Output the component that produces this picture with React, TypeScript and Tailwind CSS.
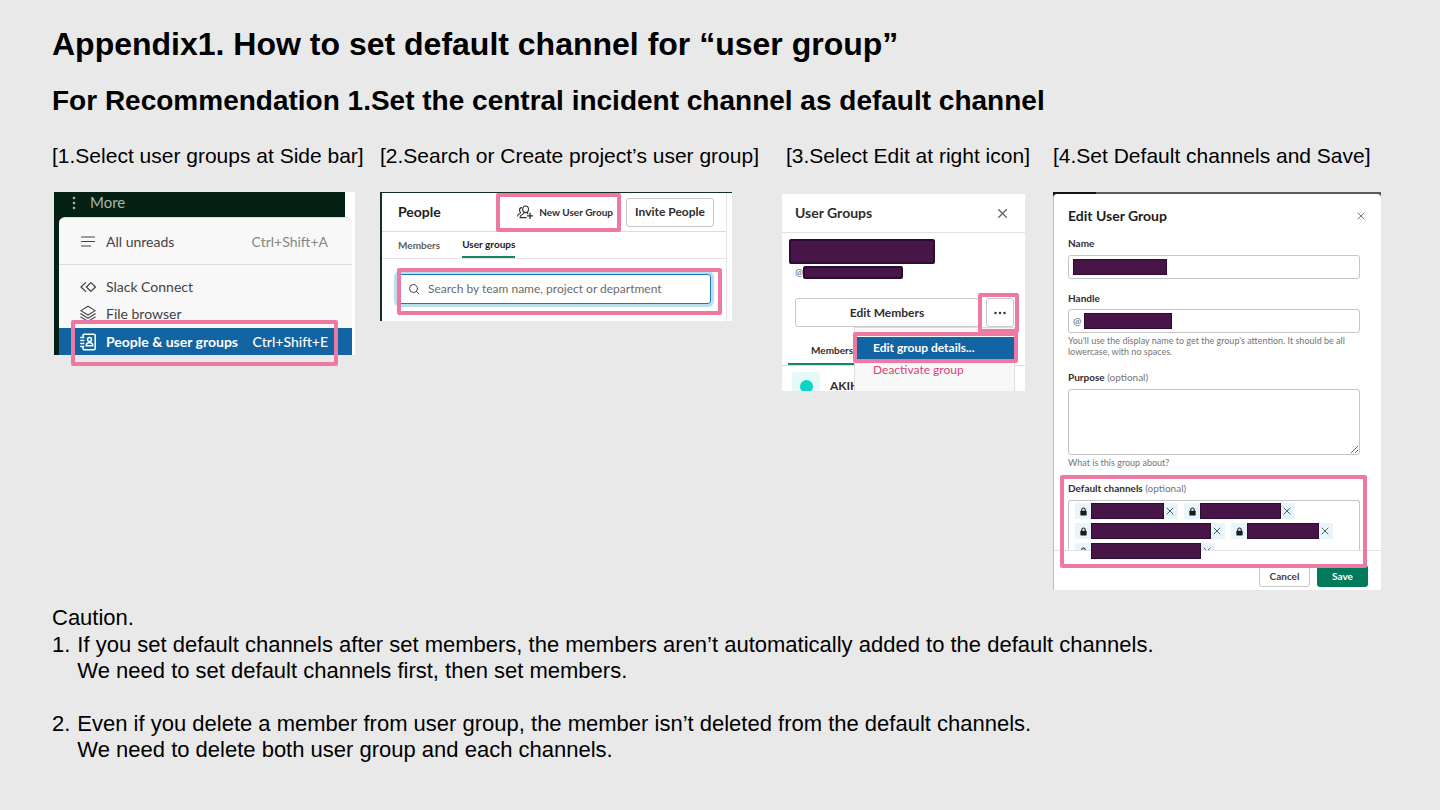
import type { ReactNode } from 'react'
import clsx from 'clsx'
import { Search, X } from 'lucide-react'

// Pink frame that marks the spot to click
function Mark({ className }: { className: string }) {
  return <span aria-hidden className={clsx('pointer-events-none absolute z-20 rounded-xs border-4 border-[#ee7aa3]', className)} />
}

// Masked private name
function Redacted({ className }: { className: string }) {
  return <span className={clsx('block shrink-0 border border-[#2c0c31] bg-[#481549]', className)} />
}

function Step({ caption, className, children }: { caption: string; className?: string; children: ReactNode }) {
  return (
    <figure className="flex min-w-0 flex-col">
      <figcaption className={clsx('mb-[22px] text-[21px] leading-7 whitespace-nowrap', className)}>{caption}</figcaption>
      {children}
    </figure>
  )
}

function UnreadsIcon() {
  return (
    <svg viewBox="0 0 16 16" className="h-4 w-4" fill="none" stroke="currentColor" strokeWidth="1.2" strokeLinecap="round">
      <path d="M1.5 3h13M1.5 7.5h13M1.5 12h9" />
    </svg>
  )
}

function ConnectIcon() {
  return (
    <svg viewBox="0 0 16 16" className="h-4 w-4" fill="none" stroke="currentColor" strokeWidth="1.3" strokeLinecap="round" strokeLinejoin="round">
      <path d="M5.6 3.6 1 8l4.6 4.4M10.9 3.6 15.4 8l-4.5 4.4L6.4 8z" />
    </svg>
  )
}

function FilesIcon() {
  return (
    <svg viewBox="0 0 16 18" className="h-[18px] w-4" fill="none" stroke="currentColor" strokeWidth="1.1" strokeLinecap="round" strokeLinejoin="round">
      <path d="M8 1.2 15.2 5.6 8 10 .8 5.6zM.8 8.8 8 13.2l7.2-4.4M.8 12 8 16.4l7.2-4.4" />
    </svg>
  )
}

function DirectoryIcon() {
  return (
    <svg viewBox="0 0 16 18" className="h-[18px] w-4" fill="none" stroke="currentColor" strokeWidth="1.5" strokeLinecap="round">
      <path d="M3 3.4v-.8A1.4 1.4 0 0 1 4.4 1.2h9.4a1.4 1.4 0 0 1 1.4 1.4v12.8a1.4 1.4 0 0 1-1.4 1.4H4.4A1.4 1.4 0 0 1 3 15.4v-.8" />
      <path d="M.8 4.5h3M.8 7.5h3M.8 10.5h3M.8 13.5h3" />
      <circle cx="9.5" cy="6.6" r="2" />
      <path d="M6.2 12.8c0-1.8.9-2.8 2.200-3h2.200c1.300.2 2.200 1.200 2.200 3z" />
    </svg>
  )
}

function AddGroupIcon() {
  return (
    <svg viewBox="0 0 16 15" className="h-[15px] w-4" fill="none" stroke="currentColor" strokeWidth="1.1" strokeLinecap="round" strokeLinejoin="round">
      <ellipse cx="8.6" cy="4.300" rx="2.900" ry="3.300" />
      <path d="M7.200 7.300c0 1.200-.6 1.600-2 2.100-1.500.6-2.200 1.500-2.200 3.200h6.200M10 7.300c0 .8.2 1.100.8 1.500" />
      <path d="M4.500 2.600C3.200 2.800 2.400 3.800 2.500 5.200c.1 1.200.6 1.800 1 2.200 0 .7-.4.9-1.200 1.300C1 9.300.6 10 .6 11" />
      <path d="M13 8.200v5.200M10.400 10.800h5.200" strokeWidth="1.300" />
    </svg>
  )
}

function LockIcon() {
  return (
    <svg viewBox="0 0 8 10" className="mt-1 h-[9px] w-[7px]" fill="none">
      <path d="M2 5V3a2 2 0 0 1 4 0v2" stroke="#1d1c1d" strokeWidth="1.2" />
      <rect x=".4" y="4.2" width="7.2" height="5.4" rx=".8" fill="#1d1c1d" />
    </svg>
  )
}

function SidebarPanel() {
  const item = 'flex w-full items-center gap-[10px] pr-6 pl-[21px] text-left'
  return (
    <div className="relative ml-[2px] max-w-[301px] bg-[#052114] pl-[5px] font-[Lato,sans-serif] text-sm text-[#454245]">
      <div className="absolute inset-y-0 right-0 w-[10px] bg-white" />
      <button className="flex h-[25px] items-center gap-[14px] pb-1 pl-[13px] text-[15px] text-[#a9b5ae]">
        <svg viewBox="0 0 4 14" className="h-[14px] w-1" fill="currentColor">
          <circle cx="2" cy="2" r="1.3" />
          <circle cx="2" cy="7" r="1.3" />
          <circle cx="2" cy="12" r="1.3" />
        </svg>
        More
      </button>
      <div className="relative mr-[3px] rounded-t-md border-t border-[#d8d8d8] bg-[#f8f8f8]">
        <button className={clsx(item, 'h-[47px] border-b border-[#dddddd] pt-[2px]')}>
          <UnreadsIcon />
          All unreads
          <span className="ml-auto text-[#868686]">Ctrl+Shift+A</span>
        </button>
        <button className={clsx(item, 'mt-2 h-[27px]')}>
          <ConnectIcon />
          Slack Connect
        </button>
        <button className={clsx(item, 'h-7')}>
          <FilesIcon />
          File browser
        </button>
        <button className={clsx(item, 'h-[27px] bg-[#1264a3] font-bold text-white')}>
          <DirectoryIcon />
          <span className="whitespace-nowrap">People &amp; user groups</span>
          <span className="ml-auto font-medium">Ctrl+Shift+E</span>
        </button>
      </div>
      <Mark className="-bottom-[11px] left-[17px] h-[46px] w-[267px]" />
    </div>
  )
}

function PeoplePanel() {
  return (
    <div className="relative h-[129px] max-w-[352px] border-t border-l-2 border-[#0e3029] bg-white pr-[5px] font-[Lato,sans-serif] text-[#1d1c1d]">
      <div className="h-full border-r border-[#eadfe6]">
        <header className="flex h-[39px] items-center border-b border-[#dddddd] pr-3 pl-4">
          <h3 className="text-sm font-bold">People</h3>
          <button className="ml-auto flex items-center gap-[6px] text-[10px] font-bold whitespace-nowrap text-[#2f2d2f]">
            <AddGroupIcon />
            New User Group
          </button>
          <button className="ml-[13px] h-[29px] w-[88px] rounded-[3px] border border-[#c8c8c8] text-xs font-bold whitespace-nowrap text-[#2f2d2f]">
            Invite People
          </button>
        </header>
        <nav className="flex h-[27px] gap-[22px] border-b border-[#e4e4e4] pl-4 text-[10px] font-bold">
          <button className="text-[#616061]">Members</button>
          <button className="border-b-2 border-[#148567]">User groups</button>
        </nav>
        <label className="mx-[15px] mt-[15px] flex h-[30px] items-center gap-2 rounded-[3px] border border-[#1d7ab0] pl-[10px] shadow-[0_0_0_3px_#b9dff0]">
          <Search className="h-3 w-3 shrink-0 text-[#454245]" />
          <input
            type="search"
            aria-label="Search"
            placeholder="Search by team name, project or department"
            className="w-full min-w-0 text-xs outline-none placeholder:text-[#6b6a6b]"
          />
        </label>
      </div>
      <Mark className="top-0 left-[114px] h-[39px] w-[125px]" />
      <Mark className="top-[75px] left-[15px] h-[47px] w-[325px]" />
    </div>
  )
}

function UserGroupsPanel() {
  return (
    <div className="relative mt-[2px] h-[197px] max-w-[243px] bg-white font-[Lato,sans-serif] text-[#2f2d2f]">
      <div className="h-full overflow-hidden">
        <header className="flex h-[39px] items-center justify-between border-b border-[#e2e2e2] pr-[15px] pl-[13px]">
          <h3 className="text-sm font-bold">User Groups</h3>
          <button aria-label="Close">
            <X className="h-[15px] w-[15px] text-[#616061]" strokeWidth={2} />
          </button>
        </header>
        <Redacted className="mt-[6px] ml-[7px] h-[25px] w-[146px] rounded-xs border-2" />
        <div className="mt-[2px] flex items-center pl-[13px] text-[10px] leading-[13px] text-[#616061]">
          @
          <Redacted className="h-[13px] w-[100px] rounded-xs border-2" />
        </div>
        <div className="mt-[19px] flex gap-[7px] pr-[11px] pl-[13px] text-xs font-bold">
          <button className="h-[29px] flex-1 rounded-[3px] border border-[#c8c8c8]">Edit Members</button>
          <button aria-label="More actions" className="flex h-[29px] w-7 items-center justify-center rounded-[3px] border border-[#c8c8c8]">
            <svg viewBox="0 0 12 4" className="h-1 w-3" fill="currentColor">
              <circle cx="1.5" cy="2" r="1.2" />
              <circle cx="6" cy="2" r="1.2" />
              <circle cx="10.5" cy="2" r="1.2" />
            </svg>
          </button>
        </div>
        <div className="mt-[10px] border-b border-[#dddddd] pl-[6px]">
          <button className="block h-7 w-24 border-b-2 border-[#148567] pl-[23px] text-left text-[10px] font-bold">Members</button>
        </div>
        <div className="mt-[6px] flex gap-[10px] pl-[10px] text-xs font-bold">
          <span className="flex h-7 w-7 items-center justify-center rounded-[3px] bg-[#e3faf8]">
            <span className="h-[13px] w-[13px] rounded-full bg-[#0bd3c5]" />
          </span>
          <span className="pt-[6px] leading-4">AKIH</span>
        </div>
      </div>
      <div className="absolute right-[10px] bottom-0 h-16 w-[161px] border-x border-t border-[#dddddd] bg-[#f8f8f8] pt-[9px] text-xs">
        <button className="block h-[22px] w-full bg-[#1264a3] pl-[18px] text-left font-bold text-white">Edit group details...</button>
        <button className="block h-[22px] w-full pl-[18px] text-left text-[#d9437d]">Deactivate group</button>
      </div>
      <Mark className="top-[99px] right-[6px] h-10 w-[41px]" />
      <Mark className="top-[138px] right-[7px] h-[31px] w-[165px]" />
    </div>
  )
}

// cut: the row runs under the footer line, only the mask stays whole
function Channel({ mask, cut }: { mask: string; cut?: boolean }) {
  return (
    <li className={clsx('flex items-start gap-1 bg-[#e8f5fa] pl-[5px]', cut ? 'h-[7px]' : 'h-4')}>
      <span className="h-full overflow-hidden">
        <LockIcon />
      </span>
      <Redacted className={clsx('h-4', mask)} />
      <button aria-label="Remove channel" className="-ml-1 h-full overflow-hidden pr-[2px]">
        <X className="my-[2px] h-3 w-3 text-[#52606a]" strokeWidth={2} />
      </button>
    </li>
  )
}

function EditGroupPanel() {
  const label = 'block text-[10px] leading-3 font-bold text-[#2f2d2f]'
  const field = 'flex h-6 items-center rounded-[3px] border border-[#c4c4c4] pl-1'
  const hint = 'text-[9px] leading-[11px] text-[#757475]'
  return (
    <div className="relative bg-[#5a5a5a] pt-[2px] font-[Lato,sans-serif]">
      <div className="absolute top-0 left-0 h-2 w-[43px] bg-[#101314]" />
      <div className="relative rounded-t border-l border-[#bcbcbc] bg-white">
        <div className="pr-[21px] pl-[14px]">
          <header className="flex h-[43px] items-center justify-between">
            <h3 className="text-sm font-bold text-[#1d1c1d]">Edit User Group</h3>
            <button aria-label="Close" className="-mr-[7px]">
              <X className="h-3 w-3 text-[#757475]" strokeWidth={2} />
            </button>
          </header>
          <label htmlFor="name" className={label}>Name</label>
          <div className={clsx(field, 'mt-[6px]')}>
            <Redacted className="h-4 w-[94px]" />
            <input id="name" className="h-full min-w-0 flex-1 outline-none" />
          </div>
          <label htmlFor="handle" className={clsx(label, 'mt-[13px]')}>Handle</label>
          <div className={clsx(field, 'mt-[5px] gap-[3px] text-[10px] text-[#616061]')}>
            @
            <Redacted className="h-4 w-[88px]" />
            <input id="handle" className="h-full min-w-0 flex-1 outline-none" />
          </div>
          <p className={clsx(hint, 'mt-[2px]')}>
            You'll use the display name to get the group's attention. It should be all
            <br />
            lowercase, with no spaces.
          </p>
          <label htmlFor="purpose" className={clsx(label, 'mt-[14px]')}>
            Purpose <span className="font-normal text-[#757475]">(optional)</span>
          </label>
          <textarea id="purpose" className="mt-[6px] block h-[66px] w-full rounded-[3px] border border-[#c4c4c4] outline-none" />
          <p className={clsx(hint, 'mt-[2px]')}>What is this group about?</p>
          <h4 className={clsx(label, 'mt-[14px]')}>
            Default channels <span className="font-normal text-[#757475]">(optional)</span>
          </h4>
          <ul className="mt-[6px] flex h-[50px] flex-wrap content-start gap-x-[6px] gap-y-1 rounded-t-[3px] border-x border-t border-[#c4c4c4] pt-[2px] pr-4 pl-[6px]">
            <Channel mask="w-[73px]" />
            <Channel mask="w-[81px]" />
            <Channel mask="w-[120px]" />
            <Channel mask="w-[72px]" />
            <Channel mask="w-[110px]" cut />
          </ul>
        </div>
        <footer className="flex justify-end gap-[7px] border-t border-[#e2e2e2] pt-[14px] pr-[13px] pb-[3px] text-[10px] font-bold">
          <button className="h-[22px] w-[51px] rounded-[3px] border border-[#c8c8c8] text-[#454245]">Cancel</button>
          <button className="h-[22px] w-[51px] rounded-[3px] bg-[#007a5a] text-white">Save</button>
        </footer>
      </div>
      <Mark className="bottom-[22px] left-[7px] h-[93px] w-[307px]" />
    </div>
  )
}

export default function App() {
  return (
    <main className="min-h-screen bg-[#e9e9e9] pt-6 pr-[59px] pb-10 pl-[52px] font-['Liberation_Sans',Arial,sans-serif] text-black">
      <h1 className="text-[32px] leading-10 font-bold">Appendix1. How to set default channel for “user group”</h1>
      <h2 className="mt-[19px] text-[28px] leading-9 font-bold">
        For Recommendation 1.Set the central incident channel as default channel
      </h2>

      <section className="mt-[23px] grid grid-cols-[328fr_402fr_271fr_328fr] items-start">
        <Step caption="[1.Select user groups at Side bar]">
          <SidebarPanel />
        </Step>
        <Step caption="[2.Search or Create project’s user group]">
          <PeoplePanel />
        </Step>
        <Step caption="[3.Select Edit at right icon]" className="pl-1">
          <UserGroupsPanel />
        </Step>
        <Step caption="[4.Set Default channels and Save]">
          <EditGroupPanel />
        </Step>
      </section>

      <section className="mt-[15px] text-[22px] leading-[26px]">
        <p className="mb-px">Caution.</p>
        <ol className="flex flex-col gap-[27px]">
          <li className="flex gap-[7px]">
            <span>1.</span>
            <p>
              If you set default channels after set members, the members aren’t automatically added to the default channels.
              <br />
              We need to set default channels first, then set members.
            </p>
          </li>
          <li className="flex gap-[7px]">
            <span>2.</span>
            <p>
              Even if you delete a member from user group, the member isn’t deleted from the default channels.
              <br />
              We need to delete both user group and each channels.
            </p>
          </li>
        </ol>
      </section>
    </main>
  )
}
